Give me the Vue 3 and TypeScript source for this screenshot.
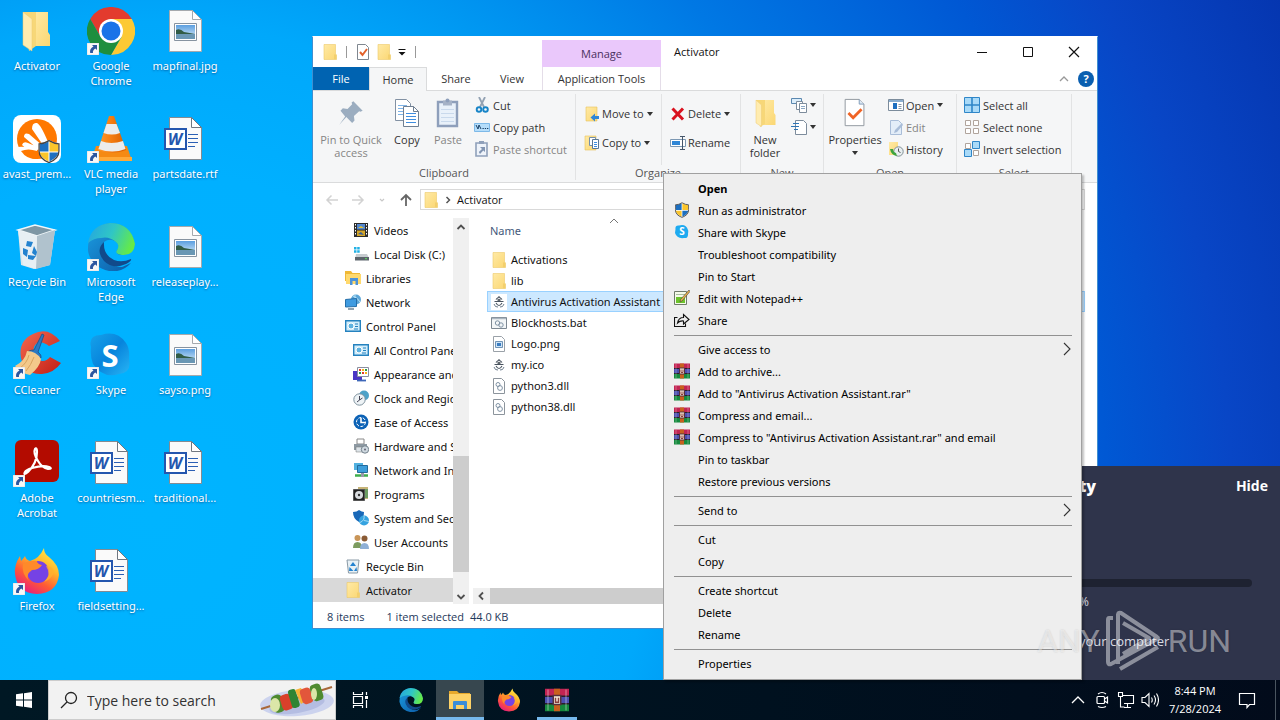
<script setup lang="ts">
interface DesktopItem { label: string; icon: string; mark?: string; shortcut?: boolean }
interface NavItem { label: string; icon: string; deep?: boolean; active?: boolean }
interface FileRow { name: string; icon: string; selected?: boolean }
interface MenuEntry { label: string; icon?: string; mark?: string; bold?: boolean; sub?: boolean }

const desktop: DesktopItem[] = [
  { label: 'Activator', icon: 'folder-open' },
  { label: 'avast_prem...', icon: 'avast' },
  { label: 'Recycle Bin', icon: 'bin' },
  { label: 'CCleaner', icon: 'ccleaner', shortcut: true },
  { label: 'Adobe Acrobat', icon: 'acrobat', shortcut: true },
  { label: 'Firefox', icon: 'firefox', shortcut: true },
  { label: 'Google Chrome', icon: 'chrome', shortcut: true },
  { label: 'VLC media player', icon: 'vlc', shortcut: true },
  { label: 'Microsoft Edge', icon: 'edge', shortcut: true },
  { label: 'Skype', icon: 'skype', mark: 'S', shortcut: true },
  { label: 'countriesm...', icon: 'word', mark: 'W' },
  { label: 'fieldsetting...', icon: 'word', mark: 'W' },
  { label: 'mapfinal.jpg', icon: 'image' },
  { label: 'partsdate.rtf', icon: 'word', mark: 'W' },
  { label: 'releaseplay...', icon: 'image' },
  { label: 'sayso.png', icon: 'image' },
  { label: 'traditional...', icon: 'word', mark: 'W' },
]

const nav: NavItem[] = [
  { label: 'Videos', icon: 'videos', deep: true },
  { label: 'Local Disk (C:)', icon: 'disk', deep: true },
  { label: 'Libraries', icon: 'libraries' },
  { label: 'Network', icon: 'network' },
  { label: 'Control Panel', icon: 'control' },
  { label: 'All Control Panel Items', icon: 'control', deep: true },
  { label: 'Appearance and Personalization', icon: 'appearance', deep: true },
  { label: 'Clock and Region', icon: 'clock', deep: true },
  { label: 'Ease of Access', icon: 'ease', deep: true },
  { label: 'Hardware and Sound', icon: 'hardware', deep: true },
  { label: 'Network and Internet', icon: 'internet', deep: true },
  { label: 'Programs', icon: 'programs', deep: true },
  { label: 'System and Security', icon: 'security', deep: true },
  { label: 'User Accounts', icon: 'users', deep: true },
  { label: 'Recycle Bin', icon: 'bin-small' },
  { label: 'Activator', icon: 'folder', active: true },
]

const files: FileRow[] = [
  { name: 'Activations', icon: 'folder' },
  { name: 'lib', icon: 'folder' },
  { name: 'Antivirus Activation Assistant', icon: 'spy', selected: true },
  { name: 'Blockhosts.bat', icon: 'bat' },
  { name: 'Logo.png', icon: 'png' },
  { name: 'my.ico', icon: 'spy-blue' },
  { name: 'python3.dll', icon: 'dll' },
  { name: 'python38.dll', icon: 'dll' },
]

const menu: MenuEntry[][] = [
  [
    { label: 'Open', bold: true },
    { label: 'Run as administrator', icon: 'shield' },
    { label: 'Share with Skype', icon: 'skype-small', mark: 'S' },
    { label: 'Troubleshoot compatibility' },
    { label: 'Pin to Start' },
    { label: 'Edit with Notepad++', icon: 'notepad' },
    { label: 'Share', icon: 'share' },
  ],
  [
    { label: 'Give access to', sub: true },
    { label: 'Add to archive...', icon: 'rar' },
    { label: 'Add to "Antivirus Activation Assistant.rar"', icon: 'rar' },
    { label: 'Compress and email...', icon: 'rar' },
    { label: 'Compress to "Antivirus Activation Assistant.rar" and email', icon: 'rar' },
    { label: 'Pin to taskbar' },
    { label: 'Restore previous versions' },
  ],
  [{ label: 'Send to', sub: true }],
  [{ label: 'Cut' }, { label: 'Copy' }],
  [{ label: 'Create shortcut' }, { label: 'Delete' }, { label: 'Rename' }],
  [{ label: 'Properties' }],
]
</script>

<template>
  <div class="screen">
    <svg class="defs" aria-hidden="true">
      <defs>
        <linearGradient id="gFolder" x1="0" x2="1" y1="0" y2="1"><stop offset="0" stop-color="#ffeaa6" /><stop offset="1" stop-color="#fbd773" /></linearGradient>
        <linearGradient id="gEdgeA" x1="0" x2="1" y1="0" y2="1"><stop offset="0" stop-color="#1b9de2" /><stop offset="1" stop-color="#0c59a4" /></linearGradient>
        <linearGradient id="gEdgeB" x1="0" x2="1" y1="0.2" y2="0.5"><stop offset="0" stop-color="#25a7e0" /><stop offset="0.5" stop-color="#30c6c5" /><stop offset="1" stop-color="#66eb45" /></linearGradient>
        <linearGradient id="gFox" x1="0.8" x2="0.2" y1="0" y2="1"><stop offset="0" stop-color="#fff04a" /><stop offset="0.35" stop-color="#ffb42a" /><stop offset="0.65" stop-color="#ff5a35" /><stop offset="1" stop-color="#e31587" /></linearGradient>
        <linearGradient id="gSkype" x1="0" x2="1" y1="0" y2="1"><stop offset="0" stop-color="#16a2ea" /><stop offset="0.5" stop-color="#0784dc" /><stop offset="1" stop-color="#28b5f5" /></linearGradient>
        <linearGradient id="gCc" x1="0" x2="1" y1="0" y2="1"><stop offset="0" stop-color="#f2694f" /><stop offset="1" stop-color="#c31e15" /></linearGradient>
        <linearGradient id="gCone" x1="0" x2="1"><stop offset="0" stop-color="#ff9a2c" /><stop offset="0.5" stop-color="#f37b10" /><stop offset="1" stop-color="#d85f00" /></linearGradient>
        <linearGradient id="gSky" x1="0" x2="0" y1="0" y2="1"><stop offset="0" stop-color="#5c9fe0" /><stop offset="1" stop-color="#dff0fb" /></linearGradient>
      </defs>

      <symbol id="folder" viewBox="0 0 16 16"><path d="M2 .5h11.500v9.500l1 1v4.500H2z" fill="url(#gFolder)" stroke="#edc96a" stroke-width=".6" /><path d="M12 10.500h2.200v4.700H12z" fill="#f3cf6c" /></symbol>
      <symbol id="folder-tall" viewBox="0 0 28 30"><path d="M10 2h13v13l1.500 2v10H10z" fill="url(#gFolder)" /><path d="M5 2h9v24l-5 3z" fill="#f7d778" /><path d="M5 2l5.500 5v21.500L5 25z" fill="#ffecb0" stroke="#eccb72" stroke-width=".5" /></symbol>
      <symbol id="folder-open" viewBox="0 0 48 48"><path d="M20 5h15v20l2 3v11H20z" fill="url(#gFolder)" /><path d="M10 5h13v34l-7 5z" fill="#f7d778" /><path d="M10 5l9 7v32l-9-6z" fill="#ffecb0" stroke="#eccb72" stroke-width=".5" /></symbol>
      <symbol id="shortcut" viewBox="0 0 12 12"><path d="M0 0h12v12H0z" fill="#f8f8f8" stroke="#c8c8c8" stroke-width=".5" /><path d="M5 2h5v5L8.300 5.500Q5.300 7.500 6 10H3.200Q2.200 6 6.500 3.600z" fill="#2c569f" /></symbol>
      <symbol id="winshield" viewBox="0 0 20 22"><path d="M10 0q5 3 10 3v7q0 8-10 12Q0 18 0 10V3q5 0 10-3z" fill="#fff" /><path d="M9.500 1.500V11H1V4q4 0 8.500-2.500z" fill="#1c6fc0" /><path d="M10.500 1.500V11H19V4q-4 0-8.500-2.500z" fill="#fbc52b" /><path d="M1 12h8.500v8.500Q2 17 1 12z" fill="#fbc52b" /><path d="M19 12h-8.500v8.500Q18 17 19 12z" fill="#1c6fc0" /><path d="M10 .6q5 3 9.500 3v7q0 7.500-9.500 11Q.5 18 .5 10.600v-7q5 0 9.500-3z" fill="none" stroke="#444" stroke-width="1.200" /></symbol>
      <symbol id="avast" viewBox="0 0 48 48"><rect width="48" height="48" rx="8" fill="#fff" /><circle cx="24" cy="24" r="20" fill="#ff7800" /><path d="M19 14q0-7 5-6 4 2 11 19l-3 6zM11 22q0-5 5-3l14 12-4 4zM9 30q1-4 6-2l12 5-5 3q-9-2-13-6z" fill="#fff" /><path d="M4 32q9-1 21 2l-7 11Q7 42 4 32z" fill="#fff" /><path d="M8 36q7-3 16 0l1 8Q14 45 8 36z" fill="#ff7800" /><svg x="25" y="25" width="22" height="23"><use href="#winshield" width="22" height="23" /></svg></symbol>
      <symbol id="bin" viewBox="0 0 48 48"><path d="M5 7l17-5 20 5-5 35-16 4-13-4z" fill="#dbe5eb" /><path d="M5 7l17-5 20 5-18 6z" fill="#7e97a5" stroke="#f1f7fa" stroke-width="1.500" /><path d="M24 13L42 7l-5 35-14 4z" fill="#b0c2cd" /><path d="M5 7l19 6-1 33-13-4z" fill="#e7eff4" /><path d="M14 18l6 1-2 5-5-1zM10 25l5 2-1 7-4-3zM21 23l3 6-1 4-4-3zM15 32l8 1-3 4-5-1z" fill="#2382cf" /></symbol>
      <symbol id="ccleaner" viewBox="0 0 48 48"><path d="M47 10Q35-5 20 3 5 10 8 27q4 17 21 16 12-1 19-11l-11-6q-5 6-11 3-7-4-5-13 4-9 15-1z" fill="url(#gCc)" /><path d="M29 3l2 1-6 17q4 3 3 6l-14-4q1-4 7-4z" fill="#2c79c2" stroke="#1c4f86" stroke-width=".8" /><path d="M14 20q9 0 14 8-1 8-11 16-8-1-15-9Q12 30 14 20z" fill="#f3c98b" /><path d="M16 24q-2 8-9 13M21 26q-3 8-8 14" stroke="#d9a35e" fill="none" /></symbol>
      <symbol id="acrobat" viewBox="0 0 48 48"><rect x="2" y="1" width="44" height="42" rx="6" fill="#b30b00" /><path d="M12 33q-2 4 3 0 9-9 9-20 0-5-2-3-2 4 3 12 4 7 10 8 5 0 1-2-6-2-17 1-6 2-7 4z" fill="none" stroke="#fff" stroke-width="2.200" /></symbol>
      <symbol id="firefox" viewBox="0 0 48 48"><path d="M31 1q0 6 5 9 10 8 10 18Q44 46 24 47 4 46 2 27q-1-9 5-18l1 5q3-3 4-5 1 4 5 5 9-2 14-13z" fill="url(#gFox)" /><circle cx="25" cy="25" r="11" fill="#7542e5" /><path d="M10 17q6-4 14-3 0 3 5 4-3 5-10 5-7 5-3 11-8-8-6-17z" fill="#ff8a2a" /><path d="M33 19q6 9-2 16 8-3 10-10-1-6-8-6z" fill="#ffb02e" opacity=".8" /></symbol>
      <symbol id="chrome" viewBox="0 0 48 48"><path d="M24 12h20.800A24 24 0 0 0 3.200 12l10.400 18z" fill="#e33b2e" /><path d="M34.400 30L24 48A24 24 0 0 0 44.800 12H24z" fill="#fcc934" /><path d="M13.600 30L3.200 12A24 24 0 0 0 24 48l10.400-18z" fill="#1e8e3e" /><circle cx="24" cy="24" r="12" fill="#fff" /><circle cx="24" cy="24" r="9.500" fill="#1a73e8" /></symbol>
      <symbol id="vlc" viewBox="0 0 48 48"><path d="M9 31h31l5 15H4z" fill="#f58a13" /><path d="M4 42h41v4H4z" fill="#ffa938" /><path d="M22 1h5l12 34q-14 6-28 0z" fill="url(#gCone)" /><path d="M19.500 9h10l3.500 9q-8 3-16.500 0z" fill="#ececec" /><path d="M14 26q10 4 22 0l2.500 8q-13 5-27 0z" fill="#ececec" /></symbol>
      <symbol id="edge" viewBox="0 0 48 48"><path d="M1 28Q0 8 18 1q20-4 28 14 5 14-10 17-8 0-6-5 4-5-2-9-6-3-11 1-4 6-2 13 5 12 20 12l9-4q-9 10-22 8Q4 44 1 28z" fill="url(#gEdgeA)" /><path d="M1 20Q4 2 23 0q21 0 25 21-1 12-13 11-8-1-5-5 3-5-1-8-7-6-15-4-7 0-13 5z" fill="url(#gEdgeB)" /><path d="M17 19q-9 8 0 19 9 9 22 3 6-3 5-5-9 4-17 1-11-5-10-18z" fill="#114a8b" /></symbol>
      <symbol id="skype" viewBox="0 0 48 48"><path d="M4 16Q1 4 14 4q16-5 25 8 4 6 3 16 3 14-10 15-16 5-26-10-3-7-2-17z" fill="url(#gSkype)" /></symbol>
      <symbol id="word" viewBox="0 0 48 48"><path d="M8.500 2.500h22l10 10v32h-32z" fill="#fafafa" stroke="#848b92" /><path d="M30.500 2.500v10h10z" fill="#fff" stroke="#707780" /><path d="M27 19.500h10M27 23.500h10M27 27.500h10M27 31.500h7" stroke="#2b5fb4" /><path d="M4 14h21v20H4z" fill="#fff" stroke="#2456ae" stroke-width="2" /></symbol>
      <symbol id="image" viewBox="0 0 48 48"><path d="M8.500 3.500h23l9 9v32h-32z" fill="#fafafa" stroke="#a5a9ad" /><path d="M31.500 3.500v9h9z" fill="#fff" stroke="#a5a9ad" /><path d="M13.500 16.500h22v17h-22z" fill="#fff" stroke="#8793a0" /><path d="M15 18h19v14H15z" fill="url(#gSky)" /><path d="M15 23q4-2 8 2 6 1 11 2H15z" fill="#315c46" /><path d="M15 27h19v5H15z" fill="#6a97b4" /></symbol>

      <symbol id="doc-check" viewBox="0 0 16 16"><path d="M2.500 .5h8l3 3v12h-11z" fill="#fff" stroke="#7f8790" /><path d="M5 8l2.500 3L12 5" fill="none" stroke="#e2612a" stroke-width="2" /></symbol>
      <symbol id="big-check" viewBox="0 0 24 32"><path d="M1.500 1.500h15l5 5v23h-20z" fill="#fff" stroke="#8d949c" /><path d="M16.500 1.500v5h5" fill="#dce9f5" stroke="#7f9ab8" /><path d="M5 16l5 5 9-9" fill="none" stroke="#f06426" stroke-width="3" /></symbol>
      <symbol id="pin" viewBox="0 0 24 24"><path d="M14 2l8 8-2 1-1-.5-4.500 4 .5 4-2 2-5-5L2 22l5-7-4-5 2-2 4 .5 4-4-.5-1.500z" fill="#9badc0" /></symbol>
      <symbol id="copy" viewBox="0 0 26 30"><path d="M1.500 1.500h11l4 4v17h-15z" fill="#fff" stroke="#8291a3" /><path d="M4 7.500h9M4 10.500h9M4 13.500h9M4 16.500h7" stroke="#7db3e8" /><path d="M9.500 8.500h10l5 5v15h-15z" fill="#fff" stroke="#6f7f92" /><path d="M19.500 8.500v5h5" fill="none" stroke="#6f7f92" /><path d="M12 15.500h10M12 18.500h10M12 21.500h10M12 24.500h10" stroke="#3f8ee0" /></symbol>
      <symbol id="paste" viewBox="0 0 24 30"><path d="M2 4h19v24H2z" fill="#e9f1fa" stroke="#8e9fbb" stroke-width="2.400" /><path d="M7 2.500h9v5H7z" fill="#a5b2c7" /><circle cx="11.500" cy="2.500" r="2" fill="#8e9fbb" /><path d="M5 11.500h13M5 15.500h13M5 19.500h13M5 23.500h13" stroke="#c9d9ec" /></symbol>
      <symbol id="cut" viewBox="0 0 16 16"><path d="M5 0l5 10M11 0L6 10" stroke="#93a2b3" stroke-width="1.800" /><circle cx="5" cy="12.500" r="2.300" fill="none" stroke="#1784c7" stroke-width="1.900" /><circle cx="11.500" cy="12.500" r="2.300" fill="none" stroke="#1784c7" stroke-width="1.900" /></symbol>
      <symbol id="path" viewBox="0 0 16 16"><path d="M.5 4.500h15v8H.5z" fill="#b5ddfa" stroke="#7db9e8" /><path d="M2 6l2 4 1-4 2 4" fill="none" stroke="#173f66" /><path d="M8.500 9.500h1.300M10.800 9.500h1.300M13 9.500h1.300" stroke="#173f66" /></symbol>
      <symbol id="paste-short" viewBox="0 0 16 16"><path d="M2 2h11v13H2z" fill="#eef3fa" stroke="#8fa0ba" stroke-width="1.600" /><path d="M5 0h5v3H5z" fill="#8fa0ba" /><path d="M6 6h5v5L9.300 9.500 6 13 4.800 11 8 8z" fill="#8295b2" /></symbol>
      <symbol id="move" viewBox="0 0 16 16"><path d="M2 1h11v14H2z" fill="url(#gFolder)" stroke="#e8c25d" stroke-width=".6" /><path d="M15 10h-4V7.500L6.500 11.500l4.500 4V13h4z" fill="#2f86d6" /></symbol>
      <symbol id="copyto" viewBox="0 0 16 16"><path d="M1 1h11v14H1z" fill="url(#gFolder)" stroke="#e8c25d" stroke-width=".6" /><path d="M5.500 2.500h6v8h-6z" fill="#fff" stroke="#7590ab" /><path d="M8.500 4.500h6v9h-6z" fill="#fff" stroke="#5b7896" /><path d="M10 7.500h3M10 9.500h3M10 11.500h3" stroke="#3f8ee0" /></symbol>
      <symbol id="delete" viewBox="0 0 16 16"><path d="M2.500 2.500l10.500 11M13 2.500L2.500 13.500" stroke="#d9111e" stroke-width="3" /></symbol>
      <symbol id="rename" viewBox="0 0 16 16"><path d="M.5 4.500h15v7H.5z" fill="#fff" stroke="#7c98b3" /><path d="M2 6h8v4H2z" fill="#2f86d6" /><path d="M10 1.500h5M10 14.500h5M12.500 1.500v13" stroke="#46566a" /></symbol>
      <symbol id="newitem" viewBox="0 0 16 16"><path d="M.5 1.500h10v5H.5z" fill="#dceefb" stroke="#5b88b0" /><path d="M5.500 4.500h6v8h-6z" fill="#fff" stroke="#7d8c9c" /><path d="M8.500 6.500h7v9h-7z" fill="#fff" stroke="#7d8c9c" /><path d="M10 9.500h4M10 11.500h4" stroke="#8aa7c4" /></symbol>
      <symbol id="easy" viewBox="0 0 16 16"><path d="M4.500 1.500h8l3 3v11h-11z" fill="#fff" stroke="#7d8c9c" /><path d="M0 7.500h8M2 4.500h6M3 10.500h4" stroke="#2f75b5" stroke-width="1.200" /></symbol>
      <symbol id="openitem" viewBox="0 0 16 16"><path d="M.5 2.500h15v11H.5z" fill="#fff" stroke="#7c8c9c" /><path d="M1 3h14v2H1z" fill="#8aaed0" /><path d="M5 6h4v6H5z" fill="#1d6fc0" /><path d="M10.500 7.500h3M10.500 9.500h3M10.500 11.500h3" stroke="#8899aa" /></symbol>
      <symbol id="edit" viewBox="0 0 16 16"><path d="M2.500 1.500h8l3 3v11h-11z" fill="#e3edf8" stroke="#a9bdd8" /><path d="M14 4l-7 7-1 3 3-1 6-7z" fill="#a9bdd8" /></symbol>
      <symbol id="history" viewBox="0 0 16 16"><path d="M1 1h9v13H1z" fill="url(#gFolder)" /><circle cx="10.500" cy="10.500" r="4.700" fill="#e8eef0" stroke="#7e8d94" /><path d="M10.500 7.500v3l2 1" fill="none" stroke="#555" /><path d="M2 8q1 6 7 7l-1-3Q5 11 5 8z" fill="#3da43d" /></symbol>
      <symbol id="selall" viewBox="0 0 16 16"><path d="M.5 .5h15v15H.5z" fill="#a9daf8" stroke="#2f86c8" /><path d="M8 1v14M1 8h14" stroke="#2f86c8" stroke-width="1.600" /></symbol>
      <symbol id="selnone" viewBox="0 0 16 16"><path d="M1.500 1.500h5v5h-5zM9.500 1.500h5v5h-5zM1.500 9.500h5v5h-5zM9.500 9.500h5v5h-5z" fill="#fff" stroke="#b0a49c" /></symbol>
      <symbol id="selinv" viewBox="0 0 16 16"><path d="M1.500 2.500h5v5h-5zM9.500 9.500h5v5h-5z" fill="#fff" stroke="#b0a49c" /><path d="M8.500 .5h7v7h-7zM.5 8.500h7v7h-7z" fill="#a9daf8" stroke="#2f86c8" /></symbol>

      <symbol id="videos" viewBox="0 0 16 16"><path d="M1 1h14v14H1z" fill="#2b2b2b" /><path d="M4 2h8v5.500H4z" fill="#5287cf" /><path d="M4 8.500h8V14H4z" fill="#d4a527" /><path d="M5 6l3-2 3 2z" fill="#e5c22e" /><path d="M5 12l3-2 3 3z" fill="#345d9c" /><path d="M2.500 2v12M13.500 2v12" stroke="#fff" stroke-dasharray="1.500 1.500" /></symbol>
      <symbol id="disk" viewBox="0 0 16 16"><path d="M1 1h2.500v2.500H1zM4.200 1h2.500v2.500H4.200zM1 4.200h2.500v2.500H1zM4.200 4.200h2.500v2.500H4.200z" fill="#21b1e5" /><path d="M3 8h11l1.500 3h-13z" fill="#c7ccd0" /><path d="M2 11h14v3.500H2z" fill="#5c656c" /><path d="M12 12.700h2" stroke="#5be25b" /></symbol>
      <symbol id="libraries" viewBox="0 0 16 16"><path d="M0 1h6l1.500 2H15v8H0z" fill="#f0b834" /><path d="M1 4h15v10H1z" fill="#ffd96d" /><path d="M5 8h8v7h-2.500v-4h-3v4H5z" fill="#4d93d9" /></symbol>
      <symbol id="network" viewBox="0 0 16 16"><circle cx="11" cy="5.500" r="5" fill="#5ca6d8" /><path d="M8 2q5 2 7 6M10 .5v8" stroke="#b9e2f5" fill="none" /><path d="M.5 5.500l11-1v8l-11 .5z" fill="#3f9be0" stroke="#256ea8" /><path d="M3 15h6" stroke="#6d8496" stroke-width="1.500" /></symbol>
      <symbol id="control" viewBox="0 0 16 16"><path d="M.7 2.700h14.600v10.600H.7z" fill="#d1edfb" stroke="#2582bf" stroke-width="1.400" /><circle cx="6" cy="8" r="3" fill="#5fb2df" stroke="#fff" /><path d="M10 6h3M10 8.500h3M9 11h4" stroke="#2582bf" stroke-width="1.200" /></symbol>
      <symbol id="appearance" viewBox="0 0 16 16"><path d="M0 5h9v9H0z" fill="#4a36c4" /><path d="M4.500 1.500h11v9h-11z" fill="#fff" stroke="#8a8fa0" /><path d="M6 3h2v2H6zM9 6h2v2H9z" fill="#e53b2a" /><path d="M9 3h2v2H9zM12 6h2v2h-2z" fill="#f6b21a" /><path d="M12 3h2v2h-2zM6 6h2v2H6z" fill="#2c9b42" /><path d="M4 14.500h9" stroke="#3d66b8" stroke-width="1.800" /></symbol>
      <symbol id="clock" viewBox="0 0 16 16"><circle cx="11" cy="5.500" r="5" fill="#4da2c8" /><circle cx="6.500" cy="9.500" r="5.700" fill="#eef3f6" stroke="#7f929e" /><path d="M6.500 6v4l3-2M4 12l2.500-2" fill="none" stroke="#445" /></symbol>
      <symbol id="ease" viewBox="0 0 16 16"><circle cx="8" cy="8" r="7.500" fill="#0c62b6" /><circle cx="8" cy="8" r="4.500" fill="none" stroke="#fff" stroke-dasharray="3 1.500" /><path d="M8 4v4.500h4" stroke="#fff" stroke-width="1.600" fill="none" /></symbol>
      <symbol id="hardware" viewBox="0 0 16 16"><path d="M4 1h7v5H4z" fill="#fff" stroke="#888" /><path d="M1 6h13v6H1z" fill="#8d99a2" /><path d="M3 9h7v5H3z" fill="#dce3e8" stroke="#777" stroke-width=".5" /><circle cx="12" cy="11.500" r="3.700" fill="#cfd9e0" stroke="#74828c" /><circle cx="12" cy="11.500" r="1" fill="#667" /></symbol>
      <symbol id="internet" viewBox="0 0 16 16"><path d="M1 1h9v7H1z" fill="#52b1e0" /><path d="M4.500 3.500h10v7h-10z" fill="#3d9edb" stroke="#236a9b" /><path d="M2 13.500h13" stroke="#3fae4c" stroke-width="2.500" /><path d="M8 11h3v4H8z" fill="#99a" /></symbol>
      <symbol id="programs" viewBox="0 0 16 16"><path d="M5 1h10v12H5z" fill="#c7b478" /><path d="M11 3h4v9h-4z" fill="#6c9d62" /><path d="M.5 3.500h11v11H.5z" fill="#222" stroke="#555" /><circle cx="6" cy="9" r="4" fill="#d9dcdf" /><circle cx="6" cy="9" r="1.200" fill="#333" /></symbol>
      <symbol id="security" viewBox="0 0 16 16"><path d="M6 0q3 2 5 2 0 8-5 10Q0 9 0 2q4 0 6-2z" fill="#1868b8" /><circle cx="11" cy="10.500" r="5" fill="#35a3e0" /><path d="M11 5.500q1 5-4 7M11 10.500l5 1" stroke="#a7dcf5" fill="none" /></symbol>
      <symbol id="users" viewBox="0 0 16 16"><circle cx="4.500" cy="4" r="3" fill="#c99558" /><path d="M0 14q0-6 4.500-6T9 14z" fill="#7d9c5f" /><circle cx="11.500" cy="4.500" r="3" fill="#8a5b35" /><path d="M7 15q0-6 4.500-6t4.500 6z" fill="#8fb0d6" /></symbol>
      <symbol id="bin-small" viewBox="0 0 16 16"><path d="M2 2h12l-1.500 13h-9z" fill="#e8f1f6" stroke="#8a9aa6" /><path d="M8 4l3 4H5zM4.500 9l4 4H4zM11.500 9l.5 4H9z" fill="#2382cf" /></symbol>
      <symbol id="spy" viewBox="0 0 16 16"><path d="M0 0h16v16H0z" fill="#fff" /><use href="#spy-blue" width="16" height="16" /></symbol>
      <symbol id="spy-blue" viewBox="0 0 16 16"><path d="M5 5.500Q8 1.500 11 5.500M3.500 7.500h9M5 9q3 5 6 0M8 2v2" fill="none" stroke="#48535f" stroke-width="1.100" /><path d="M6.500 6h3" stroke="#2b343d" stroke-width="1.500" /><path d="M3 10l1.500 2.500L7 13M13 10l-1.500 2.500L9 13" fill="none" stroke="#6c7c8c" /></symbol>
      <symbol id="bat" viewBox="0 0 16 16"><path d="M.5 2.500h15v11H.5z" fill="#f3f6f8" stroke="#7d8893" /><path d="M1 3.500h14" stroke="#a9b5c0" stroke-width="1.500" /><circle cx="6.500" cy="8" r="2.200" fill="none" stroke="#7f92a4" /><circle cx="10" cy="10" r="2.200" fill="none" stroke="#7f92a4" /></symbol>
      <symbol id="png" viewBox="0 0 16 16"><path d="M2.500 .5h8l3 3v12h-11z" fill="#fff" stroke="#9aa1a8" /><path d="M4.500 5.500h7v6h-7z" fill="#cde3f6" stroke="#6f93b5" /><path d="M6 7h4v3H6z" fill="#3a7cc0" /></symbol>
      <symbol id="dll" viewBox="0 0 16 16"><path d="M2.500 .5h8l3 3v12h-11z" fill="#fff" stroke="#8c949c" /><circle cx="7" cy="6.500" r="2" fill="none" stroke="#7f92a4" /><circle cx="9" cy="10" r="2.400" fill="none" stroke="#7f92a4" /></symbol>

      <symbol id="shield" viewBox="0 0 16 16"><use href="#winshield" x="1" y="0" width="14" height="16" /></symbol>
      <symbol id="skype-small" viewBox="0 0 16 16"><path d="M1.500 5Q1 1 5 1.500q7-2 9 4.500.5 1 0 3.500.5 5-4 4.500-7 1-9-5z" fill="#1eaaf0" /></symbol>
      <symbol id="notepad" viewBox="0 0 16 16"><path d="M.5 1.500h12v13H.5z" fill="#f5fbe9" stroke="#6f7a6a" /><path d="M2 7h9v6H2z" fill="#6cc32b" /><path d="M2 4.500h9" stroke="#a8bda0" /><path d="M15 0l1 1.500L8 11l-2 1 .5-2.500z" fill="#e8b04a" stroke="#444" stroke-width=".6" /></symbol>
      <symbol id="share" viewBox="0 0 16 16"><path d="M3.500 5.500h-3v9h11v-3M3.500 11q1-5.500 6-5.500V2.500l5.500 5-5.500 4.500V9Q6 8.500 3.500 11z" fill="none" stroke="#111" stroke-width="1.100" /></symbol>
      <symbol id="rar" viewBox="0 0 16 16"><path d="M0 .5h16v5H0z" fill="#c22453" /><path d="M0 5.500h16v5H0z" fill="#4c4fb0" /><path d="M0 10.500h16v5H0z" fill="#168a3e" /><path d="M0 5.500h16M0 10.500h16" stroke="#2a1d2c" /><path d="M2 1v14M14 1v14" stroke="#fff" stroke-opacity=".3" /><path d="M6 .5h4v15H6z" fill="#c9601d" /><path d="M5.500 5h5v6h-5z" fill="#f5ead6" stroke="#56303f" /><path d="M7 6.500v3h2v-3" fill="none" stroke="#8a3d3d" /></symbol>
      <symbol id="explorer" viewBox="0 0 24 24"><path d="M1 3h8l2 2h11v6H1z" fill="#e7a92c" /><path d="M1 6h22v15H1z" fill="#fdd267" /><path d="M5 14q0-1 1-1h12q1 0 1 1v7h-3v-4H8v4H5z" fill="#3c8ed9" /></symbol>
      <symbol id="kebab" viewBox="0 0 76 36"><ellipse cx="38" cy="21" rx="37" ry="13" fill="#ccd3ee" transform="rotate(-4 38 21)" /><ellipse cx="38" cy="23" rx="28" ry="8" fill="#b4bde2" transform="rotate(-10 38 23)" /><path d="M2 27L73 5" stroke="#a9683a" stroke-width="2" /><rect x="13" y="13" width="12" height="18" rx="5" fill="#4e8a2f" transform="rotate(-17 18 22)" /><ellipse cx="16" cy="23" rx="5" ry="7" fill="#dbe6a8" /><rect x="22" y="12" width="11" height="16" rx="4" fill="#d9402b" transform="rotate(-17 28 20)" /><rect x="31" y="7" width="8" height="19" rx="3" fill="#2f8433" transform="rotate(-17 35 17)" /><path d="M36 8l6-2 6 12-6 4z" fill="#f6b337" /><rect x="42" y="6" width="11" height="16" rx="4" fill="#e2563b" transform="rotate(-17 47 14)" /><rect x="52" y="2" width="11" height="17" rx="4" fill="#4e8a2f" transform="rotate(-17 57 10)" /><ellipse cx="55" cy="12" rx="3" ry="6" fill="#dbe6a8" /></symbol>
    </svg>

    <main class="workspace">
      <nav class="desktop" aria-label="Desktop">
        <button v-for="d in desktop" :key="d.label" class="shortcut" type="button">
          <span class="pic">
            <svg class="i48"><use :href="'#' + d.icon" /></svg>
            <b v-if="d.mark" class="mark" :class="'mark-' + d.icon">{{ d.mark }}</b>
            <svg v-if="d.shortcut" class="arrow"><use href="#shortcut" /></svg>
          </span>
          <span class="caption">{{ d.label }}</span>
        </button>
      </nav>

      <section class="window" aria-label="Activator">
        <header class="titlebar">
          <div class="quick">
            <svg class="i16"><use href="#folder" /></svg>
            <i class="bar"></i>
            <button type="button" aria-label="Properties"><svg class="i16"><use href="#doc-check" /></svg></button>
            <button type="button" aria-label="New folder"><svg class="i16"><use href="#folder" /></svg></button>
            <button type="button" aria-label="Customize"><svg class="i10" viewBox="0 0 10 10"><path d="M1.500 2.500h7" stroke="#111" /><path d="M1.500 5h7L5 8.500z" fill="#111" /></svg></button>
            <i class="bar"></i>
          </div>
          <span class="manage">Manage</span>
          <h1>Activator</h1>
          <div class="controls">
            <button type="button" aria-label="Minimize"><svg class="i12" viewBox="0 0 12 12"><path d="M1 6.500h10" stroke="#111" /></svg></button>
            <button type="button" aria-label="Maximize"><svg class="i12" viewBox="0 0 12 12"><path d="M1.500 1.500h9v9h-9z" fill="none" stroke="#111" /></svg></button>
            <button type="button" aria-label="Close"><svg class="i12" viewBox="0 0 12 12"><path d="M1 1l10 10M11 1L1 11" stroke="#111" stroke-width="1.200" /></svg></button>
          </div>
        </header>

        <div class="tabs">
          <button class="tab file" type="button">File</button>
          <button class="tab home" type="button">Home</button>
          <button class="tab share" type="button">Share</button>
          <button class="tab view" type="button">View</button>
          <button class="tab tools" type="button">Application Tools</button>
          <span class="tab-end">
            <button type="button" aria-label="Collapse ribbon"><svg class="i10" viewBox="0 0 10 10"><path d="M1 7l4-4 4 4" fill="none" stroke="#999" stroke-width="1.300" /></svg></button>
            <button class="help" type="button">?</button>
          </span>
        </div>

        <div class="ribbon">
          <div class="group clipboard">
            <div class="tools-row">
              <button class="big dim pin" type="button"><svg class="i28"><use href="#pin" /></svg><span>Pin to Quick access</span></button>
              <button class="big copy" type="button"><svg class="i28"><use href="#copy" /></svg><span>Copy</span></button>
              <button class="big dim paste" type="button"><svg class="i28"><use href="#paste" /></svg><span>Paste</span></button>
              <div class="stack">
                <button type="button"><svg class="i16"><use href="#cut" /></svg>Cut</button>
                <button type="button"><svg class="i16"><use href="#path" /></svg>Copy path</button>
                <button class="dim" type="button"><svg class="i16"><use href="#paste-short" /></svg>Paste shortcut</button>
              </div>
            </div>
            <span class="group-name">Clipboard</span>
          </div>
          <div class="group organize">
            <div class="tools-row">
              <div class="stack two lined">
                <button type="button"><svg class="i16"><use href="#move" /></svg>Move to<i class="caret"></i></button>
                <button type="button"><svg class="i16"><use href="#copyto" /></svg>Copy to<i class="caret"></i></button>
              </div>
              <div class="stack two">
                <button type="button"><svg class="i16"><use href="#delete" /></svg>Delete<i class="caret"></i></button>
                <button type="button"><svg class="i16"><use href="#rename" /></svg>Rename</button>
              </div>
            </div>
            <span class="group-name">Organize</span>
          </div>
          <div class="group new">
            <div class="tools-row">
              <button class="big new-folder" type="button"><svg class="i28"><use href="#folder-tall" /></svg><span>New folder</span></button>
              <div class="stack tight">
                <button type="button" aria-label="New item"><svg class="i16"><use href="#newitem" /></svg><i class="caret"></i></button>
                <button type="button" aria-label="Easy access"><svg class="i16"><use href="#easy" /></svg><i class="caret"></i></button>
              </div>
            </div>
            <span class="group-name">New</span>
          </div>
          <div class="group open">
            <div class="tools-row">
              <button class="big props" type="button"><svg class="i28"><use href="#big-check" /></svg><span>Properties</span><i class="caret"></i></button>
              <div class="stack tight">
                <button type="button"><svg class="i16"><use href="#openitem" /></svg>Open<i class="caret"></i></button>
                <button class="dim" type="button"><svg class="i16"><use href="#edit" /></svg>Edit</button>
                <button type="button"><svg class="i16"><use href="#history" /></svg>History</button>
              </div>
            </div>
            <span class="group-name">Open</span>
          </div>
          <div class="group select">
            <div class="tools-row">
              <div class="stack">
                <button type="button"><svg class="i16"><use href="#selall" /></svg>Select all</button>
                <button type="button"><svg class="i16"><use href="#selnone" /></svg>Select none</button>
                <button type="button"><svg class="i16"><use href="#selinv" /></svg>Invert selection</button>
              </div>
            </div>
            <span class="group-name">Select</span>
          </div>
        </div>

        <div class="address">
          <button type="button" aria-label="Back"><svg class="i14" viewBox="0 0 14 14"><path d="M13 7H2M6.500 2.500L2 7l4.500 4.500" fill="none" stroke="#d2d2d2" stroke-width="1.500" /></svg></button>
          <button type="button" aria-label="Forward"><svg class="i14" viewBox="0 0 14 14"><path d="M1 7h11M7.500 2.500L12 7l-4.500 4.500" fill="none" stroke="#d2d2d2" stroke-width="1.500" /></svg></button>
          <button type="button" aria-label="Recent"><svg class="i10" viewBox="0 0 10 10"><path d="M3 4l2 2 2-2" fill="none" stroke="#c8c8c8" stroke-width="1.200" /></svg></button>
          <button type="button" aria-label="Up"><svg class="i14" viewBox="0 0 14 14"><path d="M7 13V2M2 7l5-5 5 5" fill="none" stroke="#666" stroke-width="1.800" /></svg></button>
          <div class="crumbs">
            <svg class="i16"><use href="#folder" /></svg>
            <svg class="i10" viewBox="0 0 10 10"><path d="M3.500 2l3 3-3 3" fill="none" stroke="#555" stroke-width="1.500" /></svg>
            <button type="button">Activator</button>
          </div>
          <input class="find" type="search" aria-label="Search Activator" />
        </div>

        <div class="body">
          <ul class="tree">
            <li v-for="n in nav" :key="n.label">
              <button type="button" :class="{ deep: n.deep, active: n.active }"><svg class="i16"><use :href="'#' + n.icon" /></svg><span>{{ n.label }}</span></button>
            </li>
          </ul>
          <div class="vscroll">
            <svg class="i10" viewBox="0 0 10 10"><path d="M1.500 7L5 3.500 8.500 7" fill="none" stroke="#505050" stroke-width="1.800" /></svg>
            <div class="track"><div class="thumb"></div></div>
            <svg class="i10" viewBox="0 0 10 10"><path d="M1.500 3L5 6.500 8.500 3" fill="none" stroke="#505050" stroke-width="1.800" /></svg>
          </div>
          <div class="pane">
            <svg class="sort" viewBox="0 0 10 6"><path d="M1 5l4-4 4 4" fill="none" stroke="#777" /></svg>
            <table>
              <thead><tr><th scope="col">Name</th></tr></thead>
              <tbody>
                <tr v-for="f in files" :key="f.name" :class="{ selected: f.selected }">
                  <td><span class="cell"><svg class="i16"><use :href="'#' + f.icon" /></svg>{{ f.name }}</span></td>
                </tr>
              </tbody>
            </table>
            <div class="hscroll">
              <svg class="i10" viewBox="0 0 10 10"><path d="M7 1.500L3.500 5 7 8.500" fill="none" stroke="#505050" stroke-width="1.800" /></svg>
              <div class="hthumb"></div>
            </div>
          </div>
        </div>

        <footer class="status"><span>8 items</span><span class="chosen">1 item selected</span><span>44.0 KB</span></footer>
      </section>

      <aside class="toast">
        <div class="toast-head"><strong>ty</strong><button type="button">Hide</button></div>
        <div class="progress"></div>
        <p class="percent">%</p>
        <p class="note">your computer</p>
      </aside>

      <div class="menu" role="menu">
        <div v-for="(section, i) in menu" :key="i" class="section" role="group">
          <button v-for="m in section" :key="m.label" class="entry" :class="{ bold: m.bold }" type="button" role="menuitem">
            <span class="slot"><svg v-if="m.icon" class="i16"><use :href="'#' + m.icon" /></svg><b v-if="m.mark" class="mark mark-small">{{ m.mark }}</b></span>
            <span class="text">{{ m.label }}</span>
            <svg v-if="m.sub" class="more" viewBox="0 0 10 14"><path d="M2 1l6 6-6 6" fill="none" stroke="#333" stroke-width="1.100" /></svg>
          </button>
        </div>
      </div>

      <div class="brand">
        <span>ANY</span>
        <svg viewBox="0 0 58 62"><path d="M13 4v50M8 8H4q-1 0-1 2v42q0 3 3 2l46-25q2-1 0-2L16 3q-3-1-3 2M15 59l38-22M18 13l26 15-26 16" fill="none" stroke="currentColor" stroke-width="4" stroke-linejoin="round" /></svg>
        <span>RUN</span>
      </div>
    </main>

    <footer class="taskbar">
      <button class="task" type="button" aria-label="Start"><svg class="i16" viewBox="0 0 16 16"><path d="M0 2.300l7-1v6.200H0zM8 1.200L16 0v7.500H8zM0 8.500h7v6.200l-7-1zM8 8.500h8V16l-8-1.200z" fill="#fff" /></svg></button>
      <label class="search">
        <svg class="i18" viewBox="0 0 18 18"><circle cx="11" cy="7" r="5.500" fill="none" stroke="#222" stroke-width="1.300" /><path d="M7 11l-6 6" stroke="#222" stroke-width="1.300" /></svg>
        <input type="text" aria-label="Search" placeholder="Type here to search" />
        <svg class="kebab"><use href="#kebab" /></svg>
      </label>
      <button class="task" type="button" aria-label="Task view"><svg class="i18" viewBox="0 0 18 18"><path d="M2.500 1v2.500h9V1M2.500 17v-2.500h9V17M2.500 5.500h9v7h-9zM15.500 1v3M15.500 9v8" fill="none" stroke="#fff" stroke-width="1.200" /><path d="M14 5h3v3h-3z" fill="#fff" /></svg></button>
      <button class="task gap" type="button" aria-label="Edge"><svg class="i24"><use href="#edge" /></svg></button>
      <button class="task on" type="button" aria-label="File Explorer"><svg class="i24"><use href="#explorer" /></svg></button>
      <button class="task" type="button" aria-label="Firefox"><svg class="i24"><use href="#firefox" /></svg></button>
      <button class="task running" type="button" aria-label="WinRAR"><svg class="i24"><use href="#rar" /></svg></button>
      <div class="tray">
        <button type="button" aria-label="Hidden icons"><svg class="i18" viewBox="0 0 18 18"><path d="M3 12l6-6 6 6" fill="none" stroke="#fff" stroke-width="1.300" /></svg></button>
        <button type="button" aria-label="Meet now"><svg class="i18" viewBox="0 0 18 18"><rect x="4" y="5.500" width="7.500" height="7" rx="1" fill="none" stroke="#fff" stroke-width="1.200" /><path d="M11.500 8l3-2v6l-3-2M5 3q4-3 8 0M5 15.500q4 2 8 0" fill="none" stroke="#fff" stroke-width="1.200" /></svg></button>
        <button type="button" aria-label="Network"><svg class="i18" viewBox="0 0 18 18"><path d="M5 4.500h11.500v8H7M10.500 12.500V16M7 16.500h7M1.500 1.500h4v4h-4zM3.500 5.500V16h4" fill="none" stroke="#fff" stroke-width="1.100" /></svg></button>
        <button type="button" aria-label="Volume"><svg class="i18" viewBox="0 0 18 18"><path d="M1 6.500h3l4-4v13l-4-4H1zM10.500 6.500q1.500 2.500 0 5M13 4.500q3 4.500 0 9M15.500 2.500q4 6.500 0 13" fill="none" stroke="#fff" stroke-width="1.100" /></svg></button>
        <button class="time" type="button"><span>8:44 PM</span><span>7/28/2024</span></button>
        <button class="action" type="button" aria-label="Notifications"><svg class="i18" viewBox="0 0 18 18"><path d="M1.500 2.500h15v11h-5l-2.500 3v-3H1.500z" fill="none" stroke="#fff" stroke-width="1.200" /></svg></button>
      </div>
    </footer>
  </div>
</template>

<style>
html, body { margin: 0; height: 100%; }
</style>

<style scoped>
.screen { display: flex; flex-direction: column; height: 100vh; overflow: hidden; font-family: "Open Sans", "Noto Sans", sans-serif; font-size: 11px; line-height: 15px; color: #111; background: radial-gradient(circle farthest-corner at 12% 72%, #00b4ff 0%, #00b0ff 28%, #00a8fb 40%, #0098f2 47%, #0078e4 60%, #0058d4 77%, #0846c6 87%, #0536b0 100%); }
.defs { position: absolute; width: 0; height: 0; }
button { font: inherit; color: inherit; background: none; border: 0; padding: 0; margin: 0; }
button, span { white-space: nowrap; }
svg { display: block; flex: none; }
.i10 { width: 10px; height: 10px; }
.i12 { width: 12px; height: 12px; }
.i14 { width: 14px; height: 14px; }
.i16 { width: 16px; height: 16px; }
.i18 { width: 18px; height: 18px; }
.i24 { width: 24px; height: 24px; }
.i28 { width: 28px; height: 30px; }
.i48 { width: 48px; height: 48px; }

.workspace { position: relative; flex: 1; min-height: 0; }

.desktop { display: grid; grid-template-rows: repeat(6, 108px); grid-auto-columns: 74px; grid-auto-flow: column; width: max-content; font-family: "Noto Sans", "Open Sans", sans-serif; }
.shortcut { display: flex; flex-direction: column; align-items: center; padding-top: 7px; gap: 3px; color: #fff; text-shadow: 0 1px 2px rgba(0, 50, 110, 0.6); }
.pic { position: relative; }
.arrow { position: absolute; left: 0; bottom: 0; width: 12px; height: 12px; }
.mark { position: absolute; color: #fff; text-align: center; text-shadow: none; }
.mark-skype { left: 0; top: 8px; width: 46px; font-size: 31px; line-height: 32px; }
.mark-word { left: 4px; top: 14px; width: 20px; font-size: 16px; line-height: 20px; font-style: italic; color: #2456ae; }
.mark-small { left: 0; top: 0; width: 16px; font-size: 10px; line-height: 15px; }
.caption { white-space: normal; width: 74px; }

.window { position: absolute; left: 312px; top: 36px; right: 182px; bottom: 51px; display: flex; flex-direction: column; background: #fff; border: 1px solid #3f8fd0; border-top-color: #fff; box-sizing: border-box; overflow: hidden; }
.titlebar { display: flex; align-items: center; height: 30px; flex: none; }
.quick { display: flex; align-items: center; gap: 5px; width: 229px; padding-left: 9px; box-sizing: border-box; }
.bar { width: 1px; height: 12px; margin: 0 3px; background: #999; }
.manage { align-self: flex-end; width: 119px; height: 27px; line-height: 27px; text-align: center; background: #eac8fb; color: #4b3060; }
.titlebar h1 { margin: 0 0 0 13px; padding-bottom: 1px; font-size: 11px; font-weight: 400; flex: 1; }
.controls { display: flex; }
.controls button { width: 46px; height: 28px; display: grid; place-items: center; }

.tabs { display: flex; height: 24px; flex: none; border-bottom: 1px solid #dadbdc; color: #333; box-sizing: border-box; }
.tab { height: 23px; }
.file { width: 56px; background: #0063b1; color: #fff; }
.home { width: 58px; height: 24px; background: #f5f6f7; border: 1px solid #dadbdc; border-bottom: 0; box-sizing: border-box; padding-bottom: 1px; }
.share { width: 58px; }
.view { width: 54px; }
.tools { margin-left: 3px; width: 119px; border: solid #e4dde8; border-width: 0 1px; box-sizing: border-box; }
.tab-end { margin-left: auto; display: flex; align-items: center; gap: 9px; padding-right: 3px; }
.help { width: 16px; height: 16px; border-radius: 50%; background: #0a5fb0; color: #fff; font-weight: 700; line-height: 16px; }

.ribbon { display: flex; height: 92px; flex: none; background: #f5f6f7; border-bottom: 1px solid #dadbdc; box-sizing: border-box; color: #333; }
.group { position: relative; display: flex; flex-direction: column; border-right: 1px solid #e2e3e4; box-sizing: border-box; margin: 3px 0 2px; }
.tools-row { display: flex; flex: 1; }
.group-name { text-align: center; line-height: 15px; color: #555; }
.clipboard { width: 263px; }
.organize { width: 165px; }
.new { width: 83px; }
.open { width: 133px; }
.select { width: 115px; }
.big { display: flex; flex-direction: column; align-items: center; gap: 5px; padding-top: 4px; line-height: 13px; }
.big span { white-space: normal; }
.dim { color: #858585; }
.pin { width: 76px; }
.copy { width: 36px; }
.paste { width: 46px; }
.new-folder { width: 48px; }
.props { width: 62px; }
.big .caret { margin: 0; }
.stack { display: flex; flex-direction: column; }
.stack button { display: flex; align-items: center; gap: 3px; height: 22px; padding-left: 3px; text-align: left; }
.tight button { padding-left: 2px; gap: 2px; }
.two { padding-top: 5px; }
.two button { height: 29px; padding-left: 5px; gap: 2px; }
.organize .stack { padding-left: 3px; }
.lined { border-right: 1px solid #e2e3e4; width: 82px; }
.select .stack { padding-left: 4px; }
.caret { width: 0; height: 0; border: 3px solid transparent; border-top: 4px solid #333; border-bottom: 0; margin-left: 1px; }

.address { display: flex; align-items: center; height: 35px; flex: none; padding: 0 12px 2px; gap: 12px; box-sizing: border-box; }
.crumbs { display: flex; align-items: center; gap: 4px; flex: 1; height: 21px; padding-left: 2px; margin-left: -5px; border: 1px solid #d9d9d9; box-sizing: border-box; }
.find { width: 180px; height: 21px; border: 1px solid #d9d9d9; box-sizing: border-box; padding: 0 6px; }

.body { display: flex; flex: 1; min-height: 0; font-family: "Noto Sans", "Open Sans", sans-serif; }
.tree { list-style: none; margin: 0; padding: 0; width: 140px; overflow: hidden; }
.tree button { display: flex; align-items: center; gap: 5px; width: 100%; height: 24px; padding-left: 32px; }
.tree .deep { padding-left: 40px; }
.tree .active { background: #d9d9d9; }
.vscroll { display: flex; flex-direction: column; align-items: center; justify-content: space-between; width: 16px; padding: 4px 0 2px; background: #f0f0f0; box-sizing: border-box; }
.track { flex: 1; display: flex; flex-direction: column; justify-content: flex-end; width: 100%; padding-bottom: 20px; }
.thumb { height: 34%; background: #cdcdcd; }
.pane { position: relative; display: flex; flex-direction: column; flex: 1; min-width: 0; margin-left: 4px; }
.sort { position: absolute; left: 136px; top: 0; width: 10px; height: 6px; }
table { border-collapse: collapse; width: calc(100% - 26px); margin-left: 14px; }
th { padding: 0 3px 6px; height: 25px; text-align: left; font-weight: 400; color: #44597a; border: 0; }
td { padding: 0; height: 21px; }
.cell { display: flex; align-items: center; gap: 4px; height: 19px; padding-left: 3px; border: 1px solid transparent; }
.selected .cell { background: #cce8ff; border-color: #99d1ff; }
.hscroll { display: flex; align-items: center; gap: 4px; height: 16px; margin-top: auto; padding-left: 3px; background: #f0f0f0; }
.hthumb { flex: 1; height: 100%; background: #cdcdcd; }
.status { display: flex; align-items: center; gap: 6px; height: 24px; flex: none; padding-left: 14px; color: #1e395b; }
.chosen { margin-left: 16px; }

.toast { position: absolute; right: 0; bottom: 0; width: 214px; height: 214px; padding: 11px 12px 12px 13px; box-sizing: border-box; background: #2f344b; color: #d9dbe2; }
.toast-head { display: flex; justify-content: space-between; font-size: 14px; line-height: 18px; font-weight: 700; color: #fff; }
.toast-head strong { font-size: 16px; }
.progress { height: 8px; margin: 84px 16px 0 0; border-radius: 4px; background: #1e2231; }
.toast p { margin: 0; font-size: 13px; line-height: 18px; }
.toast .percent { padding-top: 6px; font-size: 12px; }
.toast .note { padding-top: 21px; }

.menu { position: absolute; left: 663px; top: 173px; width: 419px; padding: 4px 9px 4px 10px; box-sizing: border-box; background: #eee; border: 1px solid #a0a0a0; box-shadow: 2px 2px 2px rgba(0, 0, 0, 0.25); color: #000; font-family: "Noto Sans", "Open Sans", sans-serif; }
.section + .section { margin-top: 3px; padding-top: 3px; border-top: 1px solid #919191; }
.entry { display: flex; align-items: center; width: 100%; height: 22px; padding-bottom: 2px; }
.slot { position: relative; width: 24px; flex: none; }
.text { flex: 1; text-align: left; }
.bold { font-weight: 700; }
.more { width: 10px; height: 14px; }

.brand { position: absolute; right: 49px; bottom: 8px; display: flex; align-items: center; gap: 5px; color: rgba(255, 255, 255, 0.45); font-family: Roboto, sans-serif; font-size: 32px; line-height: 62px; text-shadow: 0 0 2px rgba(0, 0, 0, 0.15); pointer-events: none; }
.brand svg { width: 58px; height: 62px; }

.taskbar { display: flex; height: 40px; flex: none; background: linear-gradient(90deg, #001824, #00111f 60%, #020b1b); color: #fff; }
.task { display: grid; place-items: center; width: 48px; height: 40px; }
.task + .task { margin-left: 1px; }
.task + .gap { margin-left: 3px; }
.on { background: #37474f; border-bottom: 3px solid #76b9ed; padding-top: 3px; box-sizing: border-box; }
.task + .running { border-bottom: 3px solid #76b9ed; padding-top: 3px; width: 40px; margin: 0 4px; box-sizing: border-box; }
.search { display: flex; align-items: center; width: 288px; padding-left: 11px; box-sizing: border-box; background: #f2f2f2; border: 1px solid #ccc; }
.search input { flex: 1; min-width: 0; height: 30px; margin-left: 9px; padding: 0; border: 0; background: none; font: inherit; font-size: 14px; color: #333; }
.search input::placeholder { color: #333; opacity: 1; }
.kebab { width: 76px; height: 36px; }
.tray { display: flex; align-items: center; margin-left: auto; padding-right: 4px; }
.tray button { width: 24px; display: grid; place-items: center; }
.tray .time { width: 66px; line-height: 18px; }
.tray .action { width: 48px; height: 40px; padding-right: 10px; border-right: 1px solid #4a5560; }
</style>
